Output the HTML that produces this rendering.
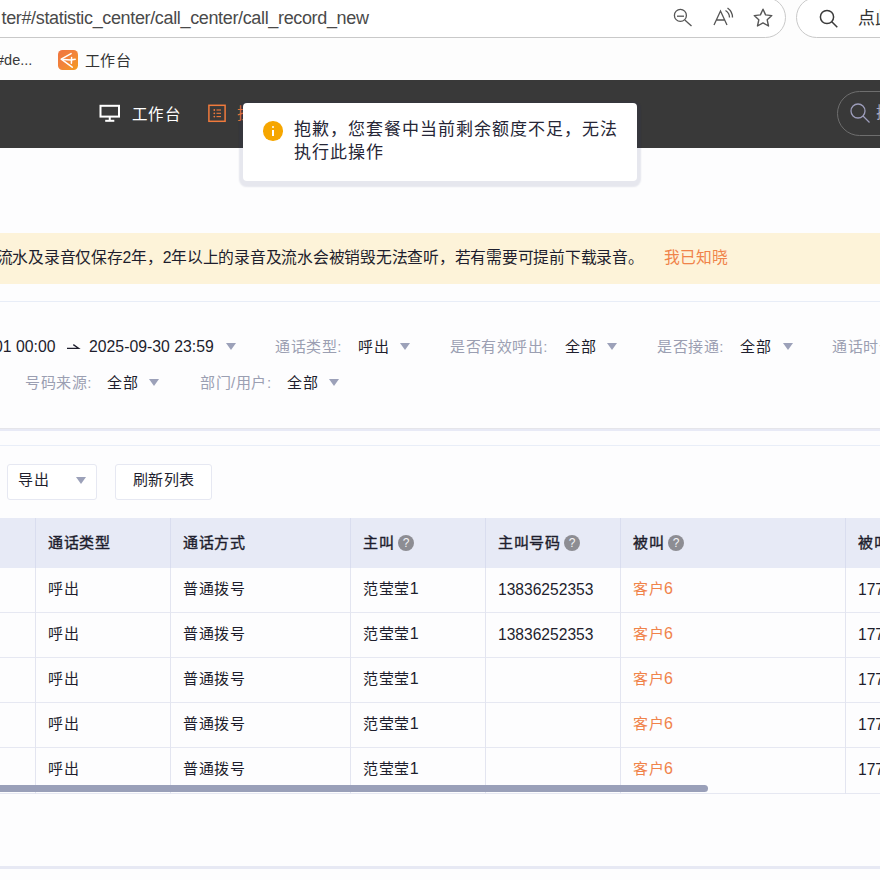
<!DOCTYPE html>
<html lang="zh-CN">
<head>
<meta charset="utf-8">
<style>
*{box-sizing:border-box;margin:0;padding:0}
html,body{width:880px;height:880px;overflow:hidden;background:#fdfdfe;font-family:"Liberation Sans",sans-serif;color:#1e1e2d}
.a{position:absolute;white-space:nowrap;line-height:20px}
.chrome{position:absolute;left:0;top:0;width:880px;height:80px;background:#fdfdfd}
.addr{position:absolute;left:-40px;top:-3px;width:826px;height:41px;border:1px solid #c9c9c9;border-radius:20.5px;background:#fff}
.sbox{position:absolute;left:796px;top:-3px;width:200px;height:41px;border:1px solid #c9c9c9;border-radius:20.5px;background:#fff}
.nav{position:absolute;left:0;top:80px;width:880px;height:68px;background:#393939}
.banner{position:absolute;left:0;top:233px;width:880px;height:51px;background:#fdf3d9}
.hl{position:absolute;left:0;width:880px}
.caret{position:absolute;width:0;height:0;border-left:5.8px solid transparent;border-right:5.8px solid transparent;border-top:7px solid #9ca1b9}
.lbl{color:#9b9fb2;font-size:15px;letter-spacing:.55px}
.val{color:#1e1e2d;font-size:15px;letter-spacing:.55px}
.dt{color:#1e1e2d;font-size:15.8px}
.btn{position:absolute;border:1px solid #e6e8f2;border-radius:3px;background:#fff}
.th{position:absolute;top:518px;height:50px;background:#e7eaf6}
.vl{position:absolute;width:1px;background:#e3e5f0}
.cell{position:absolute;font-size:15px;letter-spacing:.55px;white-space:nowrap;line-height:20px}
.q{-webkit-text-stroke:0;display:inline-block;width:16px;height:16px;border-radius:50%;background:#8d8d93;color:#f4f4f6;font-size:12px;font-weight:normal;text-align:center;line-height:16px;vertical-align:1.2px;margin-left:4px;letter-spacing:0}
.toast{position:absolute;left:243px;top:103px;width:394px;height:78px;background:#fff;border-radius:4px;box-shadow:0 2px 1.5px 3.5px rgba(30,40,100,.1)}
</style>
</head>
<body>
<div class="chrome">
  <div class="addr"></div>
  <div class="sbox"></div>
  <div class="a" style="left:1.5px;top:8px;font-size:18px;color:#4a4a4a;letter-spacing:-0.35px">ter#/statistic_center/call_center/call_record_new</div>
  <!-- zoom out icon -->
  <svg class="a" style="left:670px;top:5px" width="26" height="26" viewBox="0 0 26 26" fill="none" stroke="#555" stroke-width="1.3">
    <circle cx="10.4" cy="10.4" r="6"/><line x1="7" y1="11.2" x2="14" y2="11.2"/><line x1="14.8" y1="15" x2="21.5" y2="21"/>
  </svg>
  <!-- read aloud -->
  <svg class="a" style="left:710px;top:5px" width="26" height="26" viewBox="0 0 26 26" fill="none" stroke="#555" stroke-width="1.3">
    <path d="M4 20 L10.5 6 L17 20 M6.5 15 L14.5 15"/><path d="M15.5 5.5 Q19.5 8 19.5 12.5"/><path d="M17.5 3 Q22.5 6.5 22.5 12.5"/>
  </svg>
  <!-- star -->
  <svg class="a" style="left:750px;top:5px" width="26" height="26" viewBox="0 0 26 26" fill="none" stroke="#555" stroke-width="1.4" stroke-linejoin="round">
    <path d="M13 4.2 L15.6 9.9 L21.8 10.6 L17.2 14.8 L18.5 21 L13 17.9 L7.5 21 L8.8 14.8 L4.2 10.6 L10.4 9.9 Z"/>
  </svg>
  <!-- search -->
  <svg class="a" style="left:814px;top:4.7px" width="28" height="28" viewBox="0 0 28 28" fill="none" stroke="#3a3a3a" stroke-width="1.5">
    <circle cx="13" cy="12" r="6.6"/><line x1="17.8" y1="16.8" x2="23.3" y2="22.3"/>
  </svg>
  <div class="a" style="left:858px;top:9.4px;font-size:17px;color:#333">点此</div>
  <!-- bookmarks -->
  <div class="a" style="left:-4px;top:50px;font-size:14.5px;color:#3a3a3a">#de...</div>
  <div class="a" style="left:58px;top:50px;width:20px;height:20px;border-radius:4.5px;background:linear-gradient(135deg,#ef7440 0%,#f2843a 50%,#f59c1c 100%)">
    <svg width="20" height="20" viewBox="0 0 20 20" fill="none" stroke="#fff" stroke-width="1.5" stroke-linecap="round" stroke-linejoin="round" style="position:absolute;left:0;top:0">
      <path d="M13.1 3.6 L3.2 9.1 L14.2 17.2"/><path d="M5.4 9.6 L13 10 L17.2 9.3"/><path d="M13.6 7.6 L13.4 13.2"/>
    </svg>
  </div>
  <div class="a" style="left:85px;top:50.5px;font-size:15px;letter-spacing:.25px;color:#333">工作台</div>
</div>

<div class="nav">
  <svg class="a" style="left:99px;top:24px" width="22" height="19" viewBox="0 0 22 19" fill="none" stroke="#fff" stroke-width="2">
    <rect x="1.5" y="1.8" width="18.5" height="10.8"/><line x1="10.75" y1="12.6" x2="10.75" y2="16.5"/><line x1="6.2" y1="16.8" x2="15.3" y2="16.8"/>
  </svg>
  <div class="a" style="left:131.5px;top:24.5px;font-size:15.5px;letter-spacing:.7px;color:#fff">工作台</div>
  <svg class="a" style="left:207px;top:24px" width="20" height="19" viewBox="0 0 20 19" fill="none" stroke="#f07a3c" stroke-width="1.5">
    <rect x="1.9" y="1.3" width="16.2" height="16"/>
    <g stroke-width="1.1"><line x1="9.5" y1="6" x2="14" y2="6"/><line x1="9.5" y1="9.3" x2="14" y2="9.3"/><line x1="9.5" y1="12.6" x2="14" y2="12.6"/></g>
    <g fill="#f07a3c" stroke="none"><circle cx="7.3" cy="6" r="0.9"/><circle cx="7.3" cy="9.3" r="0.9"/><circle cx="7.3" cy="12.6" r="0.9"/></g>
  </svg>
  <div class="a" style="left:237px;top:24px;font-size:15.5px;color:#f0783a">挂机</div>
  <div class="a" style="left:837px;top:11px;width:120px;height:45px;border:1px solid #6e6e6e;border-radius:23px"></div>
  <svg class="a" style="left:846px;top:20px" width="28" height="28" viewBox="0 0 28 28" fill="none" stroke="#9d9dbb" stroke-width="1.3">
    <circle cx="12" cy="11" r="7"/><line x1="17" y1="16" x2="23.5" y2="22.5"/>
  </svg>
  <div class="a" style="left:876px;top:23px;font-size:16px;color:#a9a9c2">搜索</div>
</div>

<div class="toast">
  <div class="a" style="left:20.4px;top:18.1px;width:19.6px;height:19.6px;border-radius:50%;background:#f6a600"></div>
  <div class="a" style="left:29.3px;top:26.6px;width:1.9px;height:6.3px;background:#fff"></div>
  <div class="a" style="left:29.3px;top:23.1px;width:1.9px;height:2.1px;border-radius:1px;background:#fff"></div>
  <div class="a" style="left:51px;top:15px;font-size:17px;letter-spacing:1px;line-height:23px;color:#262636">抱歉，您套餐中当前剩余额度不足，无法<br>执行此操作</div>
</div>

<div class="banner">
  <div class="a" style="left:-3.4px;top:15px;font-size:15.8px;letter-spacing:-0.25px;color:#1e1e2d">流水及录音仅保存2年，2年以上的录音及流水会被销毁无法查听，若有需要可提前下载录音。</div>
  <div class="a" style="left:664px;top:15px;font-size:15.8px;color:#f0834a">我已知晓</div>
</div>

<div class="hl" style="top:301px;height:1px;background:#e8edf7"></div>

<!-- filters row 1 -->
<div class="a dt" style="left:-6px;top:337px">01 00:00</div>
<svg class="a" style="left:66px;top:340px" width="15" height="12" viewBox="0 0 15 12" fill="none" stroke="#1e1e2d" stroke-width="1.3"><path d="M1 8.3 L12.6 8.3 L7.3 4.6"/></svg>
<div class="a dt" style="left:89px;top:337px">2025-09-30 23:59</div>
<div class="caret" style="left:226px;top:343px"></div>
<div class="a lbl" style="left:275px;top:337px">通话类型:</div>
<div class="a val" style="left:358px;top:337px">呼出</div>
<div class="caret" style="left:400px;top:343px"></div>
<div class="a lbl" style="left:450px;top:337px">是否有效呼出:</div>
<div class="a val" style="left:565px;top:337px">全部</div>
<div class="caret" style="left:607px;top:343px"></div>
<div class="a lbl" style="left:657px;top:337px">是否接通:</div>
<div class="a val" style="left:740px;top:337px">全部</div>
<div class="caret" style="left:783px;top:343px"></div>
<div class="a lbl" style="left:832px;top:337px">通话时长:</div>
<!-- filters row 2 -->
<div class="a lbl" style="left:25px;top:373px">号码来源:</div>
<div class="a val" style="left:107px;top:373px">全部</div>
<div class="caret" style="left:149px;top:379px"></div>
<div class="a lbl" style="left:200px;top:373px">部门/用户:</div>
<div class="a val" style="left:287px;top:373px">全部</div>
<div class="caret" style="left:329px;top:379px"></div>

<div class="hl" style="top:428px;height:1px;background:#e5e5ea"></div>
<div class="hl" style="top:429px;height:2px;background:#e8eaf6"></div>
<div class="hl" style="top:445px;height:1px;background:#e9eef8"></div>

<!-- buttons -->
<div class="btn" style="left:7px;top:464px;width:90px;height:36px"></div>
<div class="a val" style="left:18px;top:470px;">导出</div>
<div class="caret" style="left:76px;top:477px"></div>
<div class="btn" style="left:115px;top:464px;width:97px;height:36px"></div>
<div class="a val" style="left:132.5px;top:470px;">刷新列表</div>

<!-- table -->
<div class="th" style="left:0;width:880px"></div>
<div class="hl" style="top:612px;height:1px;background:#e6e8f2"></div>
<div class="hl" style="top:657px;height:1px;background:#e6e8f2"></div>
<div class="hl" style="top:702px;height:1px;background:#e6e8f2"></div>
<div class="hl" style="top:747px;height:1px;background:#e6e8f2"></div>
<div class="hl" style="top:793px;height:1px;background:#e6e8f2"></div>
<div class="vl" style="left:35px;top:518px;height:276px"></div>
<div class="vl" style="left:170px;top:518px;height:276px"></div>
<div class="vl" style="left:350px;top:518px;height:276px"></div>
<div class="vl" style="left:485px;top:518px;height:276px"></div>
<div class="vl" style="left:620px;top:518px;height:276px"></div>
<div class="vl" style="left:845px;top:518px;height:276px"></div>

<div class="vl" style="left:35px;top:518px;height:50px;background:#d9ddef"></div>
<div class="vl" style="left:170px;top:518px;height:50px;background:#d9ddef"></div>
<div class="vl" style="left:350px;top:518px;height:50px;background:#d9ddef"></div>
<div class="vl" style="left:485px;top:518px;height:50px;background:#d9ddef"></div>
<div class="vl" style="left:620px;top:518px;height:50px;background:#d9ddef"></div>
<div class="vl" style="left:845px;top:518px;height:50px;background:#d9ddef"></div>
<div class="cell" style="left:48px;top:532.7px;font-weight:400;-webkit-text-stroke:.4px">通话类型</div>
<div class="cell" style="left:183px;top:532.7px;font-weight:400;-webkit-text-stroke:.4px">通话方式</div>
<div class="cell" style="left:363px;top:532.7px;font-weight:400;-webkit-text-stroke:.4px">主叫<span class="q">?</span></div>
<div class="cell" style="left:498px;top:532.7px;font-weight:400;-webkit-text-stroke:.4px">主叫号码<span class="q">?</span></div>
<div class="cell" style="left:633px;top:532.7px;font-weight:400;-webkit-text-stroke:.4px">被叫<span class="q">?</span></div>
<div class="cell" style="left:858px;top:532.7px;font-weight:400;-webkit-text-stroke:.4px">被叫号码</div>

<div class="cell" style="left:48px;top:579px">呼出</div>
<div class="cell" style="left:183px;top:579px">普通拨号</div>
<div class="cell" style="left:363px;top:579px">范莹莹<span style="font-size:16px;letter-spacing:0">1</span></div>
<div class="cell" style="left:498px;top:580.0px;font-size:15.6px;letter-spacing:0">13836252353</div>
<div class="cell" style="left:633px;top:579px;color:#f0834a">客户<span style="font-size:16px;letter-spacing:0">6</span></div>
<div class="cell" style="left:858px;top:580.0px;font-size:15.6px;letter-spacing:0">17712345678</div>
<div class="cell" style="left:48px;top:624px">呼出</div>
<div class="cell" style="left:183px;top:624px">普通拨号</div>
<div class="cell" style="left:363px;top:624px">范莹莹<span style="font-size:16px;letter-spacing:0">1</span></div>
<div class="cell" style="left:498px;top:625.0px;font-size:15.6px;letter-spacing:0">13836252353</div>
<div class="cell" style="left:633px;top:624px;color:#f0834a">客户<span style="font-size:16px;letter-spacing:0">6</span></div>
<div class="cell" style="left:858px;top:625.0px;font-size:15.6px;letter-spacing:0">17712345678</div>
<div class="cell" style="left:48px;top:669px">呼出</div>
<div class="cell" style="left:183px;top:669px">普通拨号</div>
<div class="cell" style="left:363px;top:669px">范莹莹<span style="font-size:16px;letter-spacing:0">1</span></div>
<div class="cell" style="left:498px;top:669px"></div>
<div class="cell" style="left:633px;top:669px;color:#f0834a">客户<span style="font-size:16px;letter-spacing:0">6</span></div>
<div class="cell" style="left:858px;top:670.0px;font-size:15.6px;letter-spacing:0">17712345678</div>
<div class="cell" style="left:48px;top:714px">呼出</div>
<div class="cell" style="left:183px;top:714px">普通拨号</div>
<div class="cell" style="left:363px;top:714px">范莹莹<span style="font-size:16px;letter-spacing:0">1</span></div>
<div class="cell" style="left:498px;top:714px"></div>
<div class="cell" style="left:633px;top:714px;color:#f0834a">客户<span style="font-size:16px;letter-spacing:0">6</span></div>
<div class="cell" style="left:858px;top:715.0px;font-size:15.6px;letter-spacing:0">17712345678</div>
<div class="cell" style="left:48px;top:759px">呼出</div>
<div class="cell" style="left:183px;top:759px">普通拨号</div>
<div class="cell" style="left:363px;top:759px">范莹莹<span style="font-size:16px;letter-spacing:0">1</span></div>
<div class="cell" style="left:498px;top:759px"></div>
<div class="cell" style="left:633px;top:759px;color:#f0834a">客户<span style="font-size:16px;letter-spacing:0">6</span></div>
<div class="cell" style="left:858px;top:760.0px;font-size:15.6px;letter-spacing:0">17712345678</div>

<div class="a" style="left:-10px;top:785px;width:718px;height:7px;border-radius:4px;background:#9aa0b9"></div>

<div class="hl" style="top:866px;height:3px;background:#e7e9f4"></div>
</body>
</html>
